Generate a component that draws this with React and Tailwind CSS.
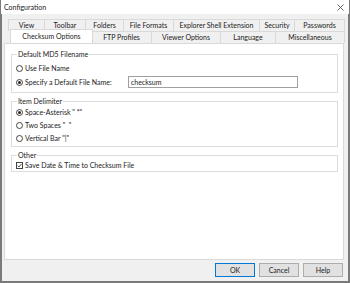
import React from "react";

const row1 = [
  ["View", 36],
  ["Toolbar", 41],
  ["Folders", 38],
  ["File Formats", 50],
  ["Explorer Shell Extension", 86],
  ["Security", 35],
  ["Passwords", 50],
];
const row2 = [
  ["FTP Profiles", 60],
  ["Viewer Options", 69],
  ["Language", 55],
  ["Miscellaneous", 69],
];

function Radio({ checked }) {
  return (
    <span className="w-[7px] h-[7px] rounded-full border border-[#444] bg-white flex items-center justify-center mr-[2px] shrink-0">
      {checked && <span className="w-[3px] h-[3px] rounded-full bg-[#222]" />}
    </span>
  );
}

function Tab({ label, w }) {
  return (
    <div
      className="h-[12px] border border-[#d9d9d9] border-b-0 -ml-px first:ml-0 bg-[#f0f0f0] flex items-center justify-center text-[7px] text-[#222]"
      style={{ width: w + 1 }}
    >
      {label}
    </div>
  );
}

export default function App() {
  return (
    <div
      className="w-[350px] h-[283px] bg-white flex flex-col text-[#222]"
      style={{ fontFamily: 'Lato, "Noto Sans", sans-serif' }}
    >
      {/* Title bar */}
      <div className="h-[14px] flex items-center justify-between pl-[3px] pr-[4px] bg-white border-x border-[#7a7a7a]">
        <span className="text-[7px] leading-none">Configuration</span>
        <svg width="7" height="7" viewBox="0 0 7 7" className="mr-[1px]">
          <path d="M0.5 0.5L6.5 6.5M6.5 0.5L0.5 6.5" stroke="#444" strokeWidth="0.8" />
        </svg>
      </div>
      {/* Body */}
      <div className="flex-1 bg-[#f0f0f0] border-x-2 border-b-2 border-[#7a7a7a] flex flex-col px-[2px]">
        {/* Tabs */}
        <div className="mt-[5px] pl-[4px] flex flex-col">
          <div className="flex">
            {row1.map(([l, w]) => (
              <Tab key={l} label={l} w={w} />
            ))}
          </div>
          <div className="flex">
            <div className="relative z-10 w-[83px] h-[14px] -mt-[2px] -mb-[1px] bg-white border border-[#d9d9d9] border-b-0 flex items-center justify-center text-[7px] ml-[2px] -mr-px">
              Checksum Options
            </div>
            {row2.map(([l, w]) => (
              <Tab key={l} label={l} w={w} />
            ))}
          </div>
        </div>
        {/* Panel */}
        <div className="h-[217px] mr-[2px] bg-white border border-[#d9d9d9] pl-[6px] pr-[5px] pt-[5px] flex flex-col gap-[3px] text-[7px]">
          <fieldset className="border border-[#dcdcdc] pl-[4px] pt-[2px] pb-[3px]">
            <legend className="ml-[1px] px-[1px] leading-[10px]">Default MD5 Filename</legend>
            <div className="h-[14px] flex items-center">
              <Radio />
              <span>Use File Name</span>
            </div>
            <div className="h-[14px] flex items-center">
              <Radio checked />
              <span className="w-[103px]">Specify a Default File Name:</span>
              <div className="w-[170px] h-[12px] border border-[#a0a0a0] bg-white flex items-center pl-[2px]">
                checksum
              </div>
            </div>
          </fieldset>
          <fieldset className="border border-[#dcdcdc] pl-[4px] pt-0 pb-[1px]">
            <legend className="ml-[1px] px-[1px] leading-[10px]">Item Delimiter</legend>
            <div className="h-[13px] flex items-center">
              <Radio checked />
              <span className="whitespace-pre">Space-Asterisk " *"</span>
            </div>
            <div className="h-[13px] flex items-center">
              <Radio />
              <span className="whitespace-pre">Two Spaces "  "</span>
            </div>
            <div className="h-[13px] flex items-center">
              <Radio />
              <span className="whitespace-pre">Vertical Bar "|"</span>
            </div>
          </fieldset>
          <fieldset className="border border-[#dcdcdc] pl-[4px] pt-0 pb-[1px]">
            <legend className="ml-[1px] px-[1px] leading-[10px]">Other</legend>
            <div className="h-[10px] flex items-center">
              <span className="w-[7px] h-[7px] border border-[#444] bg-white mr-[2px] flex items-center justify-center">
                <svg width="5" height="5" viewBox="0 0 5 5">
                  <path d="M0.5 2.6L1.9 4L4.5 1" stroke="#222" strokeWidth="0.8" fill="none" />
                </svg>
              </span>
              <span>Save Date &amp; Time to Checksum File</span>
            </div>
          </fieldset>
        </div>
        {/* Buttons */}
        <div className="flex justify-end gap-[4px] mt-[3px] pr-[3px]">
          <button className="w-[40px] h-[14px] bg-[#e1e1e1] border border-[#0078d7] text-[7px] leading-none flex items-center justify-center">
            OK
          </button>
          <button className="w-[40px] h-[14px] bg-[#e1e1e1] border border-[#adadad] text-[7px] leading-none flex items-center justify-center">
            Cancel
          </button>
          <button className="w-[40px] h-[14px] bg-[#e1e1e1] border border-[#adadad] text-[7px] leading-none flex items-center justify-center">
            Help
          </button>
        </div>
      </div>
    </div>
  );
}
